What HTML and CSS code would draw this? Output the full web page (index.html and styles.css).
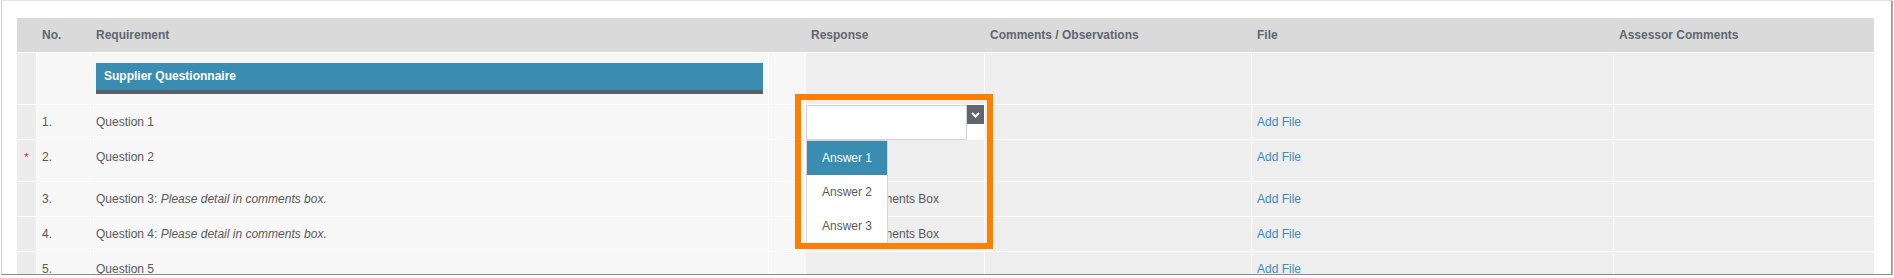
FILE: index.html
```html
<!DOCTYPE html>
<html lang="en">
<head>
<meta charset="utf-8">
<title>Supplier Questionnaire</title>
<link rel="stylesheet" href="styles.css">
</head>
<body>
<div class="frame">
  <div class="sheet">
    <div class="row head">
      <div class="c"></div>
      <div class="c">No.</div>
      <div class="c">Requirement</div>
      <div class="c"></div>
      <div class="c">Response</div>
      <div class="c">Comments / Observations</div>
      <div class="c">File</div>
      <div class="c">Assessor Comments</div>
    </div>

    <div class="row body section">
      <div class="c c-star"></div>
      <div class="c c-no"></div>
      <div class="c c-req c-bar"><div class="bar">Supplier Questionnaire</div></div>
      <div class="c c-gap"></div>
      <div class="c c-resp"></div>
      <div class="c c-com"></div>
      <div class="c c-file"></div>
      <div class="c c-assess"></div>
    </div>

    <div class="row body">
      <div class="c c-star"></div>
      <div class="c c-no">1.</div>
      <div class="c c-req">Question 1</div>
      <div class="c c-gap"></div>
      <div class="c c-resp c-select">
        <div class="select">
          <div class="select-input"></div>
          <div class="select-side">
            <div class="select-btn">
              <svg width="9" height="6" viewBox="0 0 9 6"><polyline points="1,1 4.5,4.5 8,1" fill="none" stroke="#fff" stroke-width="2"/></svg>
            </div>
          </div>
          <div class="options">
            <div class="option active">Answer 1</div>
            <div class="option">Answer 2</div>
            <div class="option">Answer 3</div>
          </div>
        </div>
      </div>
      <div class="c c-com"></div>
      <div class="c c-file"><a class="link">Add File</a></div>
      <div class="c c-assess"></div>
    </div>

    <div class="row body tall">
      <div class="c c-star"><span class="req-mark">*</span></div>
      <div class="c c-no">2.</div>
      <div class="c c-req">Question 2</div>
      <div class="c c-gap"></div>
      <div class="c c-resp"></div>
      <div class="c c-com"></div>
      <div class="c c-file"><a class="link">Add File</a></div>
      <div class="c c-assess"></div>
    </div>

    <div class="row body">
      <div class="c c-star"></div>
      <div class="c c-no">3.</div>
      <div class="c c-req">Question 3: <em>Please detail in comments box.</em></div>
      <div class="c c-gap"></div>
      <div class="c c-resp">Refer to Comments Box</div>
      <div class="c c-com"></div>
      <div class="c c-file"><a class="link">Add File</a></div>
      <div class="c c-assess"></div>
    </div>

    <div class="row body">
      <div class="c c-star"></div>
      <div class="c c-no">4.</div>
      <div class="c c-req">Question 4: <em>Please detail in comments box.</em></div>
      <div class="c c-gap"></div>
      <div class="c c-resp">Refer to Comments Box</div>
      <div class="c c-com"></div>
      <div class="c c-file"><a class="link">Add File</a></div>
      <div class="c c-assess"></div>
    </div>

    <div class="row body">
      <div class="c c-star"></div>
      <div class="c c-no">5.</div>
      <div class="c c-req">Question 5</div>
      <div class="c c-gap"></div>
      <div class="c c-resp"></div>
      <div class="c c-com"></div>
      <div class="c c-file"><a class="link">Add File</a></div>
      <div class="c c-assess"></div>
    </div>
  </div>
  <div class="callout"></div>
</div>
</body>
</html>
```

FILE: styles.css
```css
html, body {
  margin: 0;
  padding: 0;
  background: #fff;
}

body {
  font-family: "Liberation Sans", Arial, sans-serif;
  font-size: 12px;
  color: #5a5a5a;
}

.frame {
  position: relative;
  box-sizing: border-box;
  width: 1891px;
  height: 275px;
  margin-left: 1px;
  padding: 17px 0 0 15px;
  border: 1px solid;
  border-color: #e4e4e4 #9a9a9a #8a8a8a #d0d0d0;
  box-shadow: 1px 1px 1px rgba(0, 0, 0, 0.3);
  background: #fff;
  overflow: hidden;
}

.sheet {
  display: grid;
  row-gap: 1px;
  width: 1857px;
  background: #fff;
}

.row {
  display: grid;
  grid-template-columns: 19px 53px 677px 36px 178px 266px 361px 260px;
  column-gap: 1px;
}

.head {
  height: 34px;
  background: #dadada;
  align-items: center;
  font-weight: bold;
  color: #5f6770;
}

.head .c {
  padding: 0 5px;
  white-space: nowrap;
}

.body .c {
  padding: 10px 5px;
  line-height: 14px;
  background: #eeeeee;
  white-space: nowrap;
}

.body .c-star {
  background: #ececec;
  padding: 10px 0;
  text-align: center;
}

.body .c-no,
.body .c-req,
.body .c-gap {
  background: #f7f7f7;
}

.tall {
  grid-template-rows: 41px;
}

.req-mark {
  color: #e8141b;
  font-size: 11px;
}

.c-req em {
  font-style: italic;
}

.bar {
  height: 27px;
  line-height: 27px;
  padding-left: 8px;
  background: #3a8cb1;
  border-bottom: 4px solid #5a6068;
  color: #fff;
  font-weight: bold;
}

.link {
  color: #3b8bbb;
  text-decoration: none;
}

.body .c-select {
  padding: 0;
}

.select {
  position: relative;
  display: flex;
  height: 35px;
  margin-bottom: -1px;
  background: #fff;
}

.select-input {
  flex: 1;
  border: 1px solid #d4d4d4;
  background: #fff;
}

.select-side {
  width: 17px;
  background: #fff;
}

.select-btn {
  height: 19px;
  background: #5f666d;
  display: flex;
  align-items: center;
  justify-content: center;
}

.options {
  position: absolute;
  top: 100%;
  left: 0;
  z-index: 2;
  box-sizing: border-box;
  width: 82px;
  border: 1px solid #d6d6d6;
  background: #fff;
}

.option {
  height: 34px;
  line-height: 34px;
  text-align: center;
  color: #5a5a5a;
}

.option.active {
  background: #3a8cb1;
  color: #fff;
}

.callout {
  position: absolute;
  left: 793px;
  top: 93px;
  box-sizing: border-box;
  width: 198px;
  height: 155px;
  border: 6px solid #ff8000;
  z-index: 3;
}
```
